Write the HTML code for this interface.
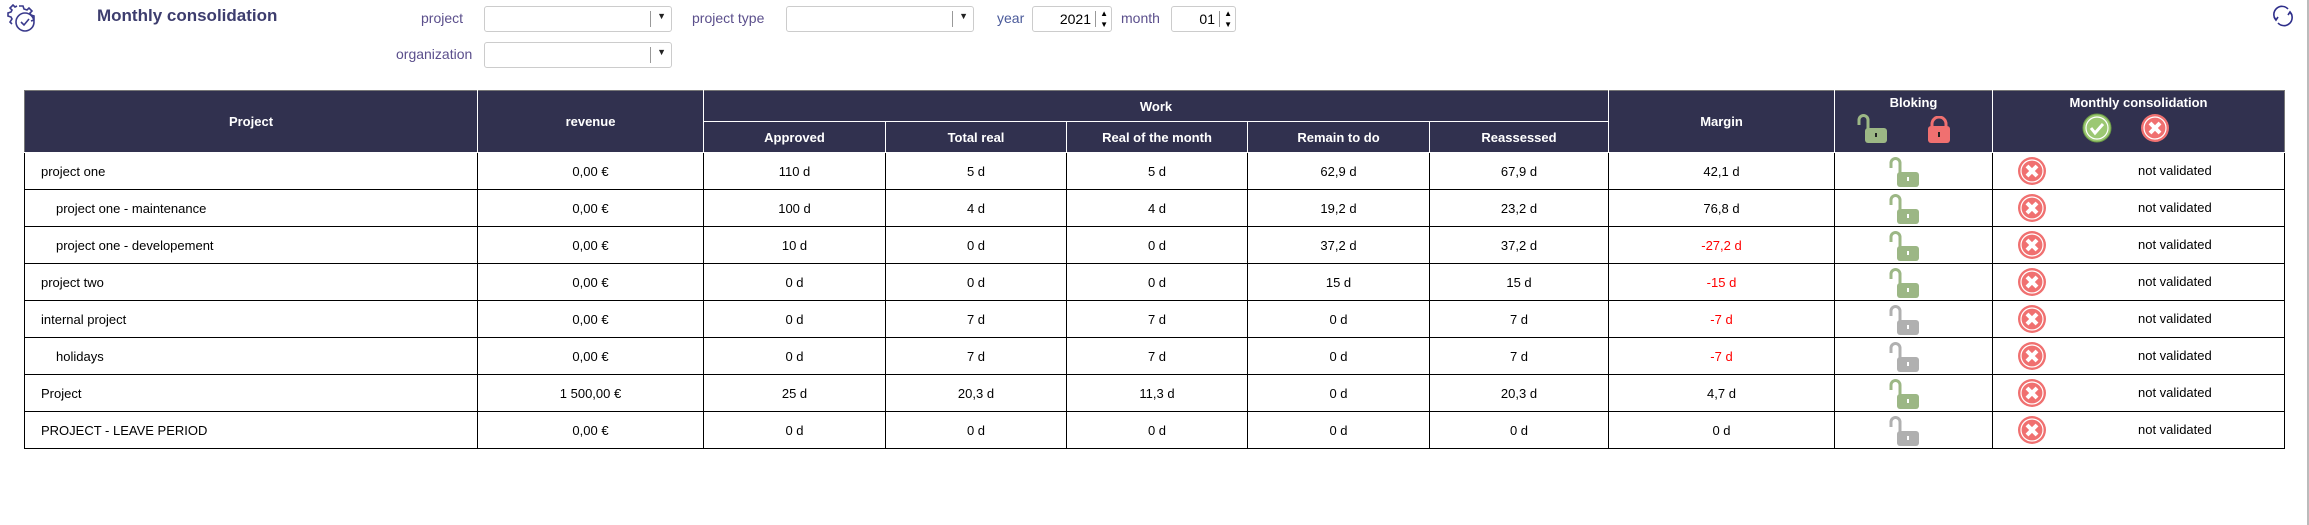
<!DOCTYPE html>
<html><head><meta charset="utf-8"><style>
body{margin:0;width:2309px;height:525px;background:#fff;font-family:"Liberation Sans",Tahoma,sans-serif;position:relative;overflow:hidden}
.a{position:absolute}
.lbl{color:#5b4f8c;font-size:14px}
.sel{position:absolute;border:1px solid #ccc;border-radius:3px;background:#fff;height:24px}
.sel .bar{position:absolute;right:20px;top:4px;bottom:4px;border-left:1px solid #999}
.sel .arr{position:absolute;right:5px;top:4px;font-size:9px;color:#222}
table{position:absolute;left:24px;top:90px;border-collapse:collapse;table-layout:fixed;font-size:13px}
th{background:#31314f;color:#fff;font-weight:bold;border:1px solid #fff;padding:0;font-size:13px}
td{border:1px solid #000;height:36px;text-align:center;color:#000;padding:0}
td.n{text-align:left;padding-left:16px}
td.i{text-align:left;padding-left:31px}
.r{color:#f00}
.rightline{position:absolute;left:2307px;top:0;width:2px;height:525px;background:#bbb}
</style></head><body>
<svg class="a" style="left:6px;top:4px" width="32" height="30" viewBox="0 0 32 30" fill="none" stroke="#3a3a8c" stroke-width="1.6">
<path d="M13 2h4l1 3 3 1 2-2 3 3-2 2 1 2 3 1v4l-3 1M6 20l-2-2 2-3-1-2-3-1V9l3-1 1-2-2-2 3-3 2 2 2-1"/>
<circle cx="19" cy="18" r="9"/><path d="M15 18l3 3 5-6"/></svg>
<div class="a" style="left:97px;top:6px;font-size:17px;font-weight:bold;color:#3d3d6e">Monthly consolidation</div>
<div class="a lbl" style="left:421px;top:10px">project</div>
<div class="sel" style="left:484px;top:6px;width:186px"><div class="bar"></div><div class="arr">▼</div></div>
<div class="a lbl" style="left:692px;top:10px">project type</div>
<div class="sel" style="left:786px;top:6px;width:186px"><div class="bar"></div><div class="arr">▼</div></div>
<div class="a lbl" style="left:997px;top:10px;color:#4a5a9a">year</div>
<div class="sel" style="left:1032px;top:6px;width:78px"><div class="a" style="right:20px;top:4px;font-size:14px">2021</div><div class="bar" style="right:15px"></div><div class="a" style="right:3px;top:1px;font-size:8px;line-height:11px">▲<br>▼</div></div>
<div class="a lbl" style="left:1121px;top:10px">month</div>
<div class="sel" style="left:1171px;top:6px;width:63px"><div class="a" style="right:20px;top:4px;font-size:14px">01</div><div class="bar" style="right:15px"></div><div class="a" style="right:3px;top:1px;font-size:8px;line-height:11px">▲<br>▼</div></div>
<div class="a lbl" style="left:396px;top:46px">organization</div>
<div class="sel" style="left:484px;top:42px;width:186px"><div class="bar"></div><div class="arr">▼</div></div>
<svg class="a" style="left:2271px;top:5px" width="24" height="22" viewBox="0 0 24 22" fill="none" stroke="#2e2e8a" stroke-width="1.6"><path d="M5 15A8 8 0 0 1 17 4M19 7A8 8 0 0 1 7 18"/><path d="M3 12l2 3 2-3M17 10l2-3 2 3"/></svg>
<div class="rightline"></div>
<table>
<colgroup><col style="width:453px"><col style="width:226px"><col style="width:182px"><col style="width:181px"><col style="width:181px"><col style="width:182px"><col style="width:179px"><col style="width:226px"><col style="width:158px"><col style="width:292px"></colgroup>
<tr style="height:31px"><th rowspan="2" style="border-left-color:#777;border-top-color:#777">Project</th><th rowspan="2" style="border-top-color:#777">revenue</th><th colspan="5" style="border-top-color:#777">Work</th><th rowspan="2" style="border-top-color:#777">Margin</th>
<th rowspan="2" style="border-top-color:#777;vertical-align:top;padding-top:4px">Bloking<div style="position:relative;height:32px">
<svg class="a" style="left:22px;top:3px" width="31" height="31" viewBox="0 0 31 31"><path d="M11 16V7a4.5 4.5 0 0 0-9 0v5" stroke="#9cb785" stroke-width="3" fill="none"/><rect x="8" y="15" width="22" height="15" rx="3" fill="#9cb785"/><rect x="18" y="20" width="2" height="4" fill="#222"/></svg>
<svg class="a" style="left:92px;top:6px" width="24" height="28" viewBox="0 0 24 28"><path d="M5 12V8a7 7 0 0 1 14 0v4" stroke="#f07070" stroke-width="3" fill="none"/><rect x="1" y="10" width="22" height="17" rx="3" fill="#f07070"/><rect x="11" y="16" width="2" height="5" fill="#222"/></svg></div></th>
<th rowspan="2" style="border-top-color:#777;border-right-color:#777;vertical-align:top;padding-top:4px">Monthly consolidation<div style="position:relative;height:32px">
<svg class="a" style="left:89px;top:3px" width="30" height="30" viewBox="0 0 30 30"><circle cx="15" cy="15" r="14" fill="#9cc873" stroke="#6a9a45" stroke-width="1"/><circle cx="15" cy="15" r="11" fill="none" stroke="#fff" stroke-width="1.2"/><path d="M9 15l4 5 8-9" stroke="#fff" stroke-width="3" fill="none"/></svg>
<svg class="a" style="left:147px;top:3px" width="30" height="30" viewBox="0 0 30 30"><circle cx="15" cy="15" r="14" fill="#f07070"/><circle cx="15" cy="15" r="11" fill="none" stroke="#fff" stroke-width="1.2"/><path d="M10 10l10 10M20 10L10 20" stroke="#fff" stroke-width="4"/></svg></div></th></tr>
<tr style="height:31px"><th>Approved</th><th>Total real</th><th>Real of the month</th><th>Remain to do</th><th>Reassessed</th></tr>
<tr><td class="n">project one</td><td>0,00 €</td><td>110 d</td><td>5 d</td><td>5 d</td><td>62,9 d</td><td>67,9 d</td><td>42,1 d</td><td>LG</td><td>X</td></tr>
<tr><td class="i">project one - maintenance</td><td>0,00 €</td><td>100 d</td><td>4 d</td><td>4 d</td><td>19,2 d</td><td>23,2 d</td><td>76,8 d</td><td>LG</td><td>X</td></tr>
<tr><td class="i">project one - developement</td><td>0,00 €</td><td>10 d</td><td>0 d</td><td>0 d</td><td>37,2 d</td><td>37,2 d</td><td class="r">-27,2 d</td><td>LG</td><td>X</td></tr>
<tr><td class="n">project two</td><td>0,00 €</td><td>0 d</td><td>0 d</td><td>0 d</td><td>15 d</td><td>15 d</td><td class="r">-15 d</td><td>LG</td><td>X</td></tr>
<tr><td class="n">internal project</td><td>0,00 €</td><td>0 d</td><td>7 d</td><td>7 d</td><td>0 d</td><td>7 d</td><td class="r">-7 d</td><td>LY</td><td>X</td></tr>
<tr><td class="i">holidays</td><td>0,00 €</td><td>0 d</td><td>7 d</td><td>7 d</td><td>0 d</td><td>7 d</td><td class="r">-7 d</td><td>LY</td><td>X</td></tr>
<tr><td class="n">Project</td><td>1 500,00 €</td><td>25 d</td><td>20,3 d</td><td>11,3 d</td><td>0 d</td><td>20,3 d</td><td>4,7 d</td><td>LG</td><td>X</td></tr>
<tr><td class="n">PROJECT - LEAVE PERIOD</td><td>0,00 €</td><td>0 d</td><td>0 d</td><td>0 d</td><td>0 d</td><td>0 d</td><td>0 d</td><td>LY</td><td>X</td></tr>
</table>
<script>
document.querySelectorAll('td').forEach(function(td){
 var t=td.textContent;
 if(t==='LG'||t==='LY'){var c=t==='LG'?'#9cb785':'#b0b0b0';
  td.innerHTML='<svg width="31" height="32" viewBox="0 0 31 32" style="display:block;margin:2px auto 0 auto;position:relative;left:-9px"><path d="M11 17V7a4.5 4.5 0 0 0-9 0v5" stroke="'+c+'" stroke-width="3" fill="none"/><rect x="8" y="16" width="22" height="15" rx="3" fill="'+c+'"/><rect x="18" y="21" width="2" height="4" fill="#fff"/></svg>';}
 else if(t==='X'){td.style.position='relative';td.innerHTML='<svg width="30" height="30" viewBox="0 0 30 30" style="position:absolute;left:24px;top:3px"><circle cx="15" cy="15" r="14" fill="#f07070"/><circle cx="15" cy="15" r="11" fill="none" stroke="#fff" stroke-width="1.2"/><path d="M10 10l10 10M20 10L10 20" stroke="#fff" stroke-width="4"/></svg><span style="position:absolute;left:145px;top:10px">not validated</span>';}
});
</script>
</body></html>
